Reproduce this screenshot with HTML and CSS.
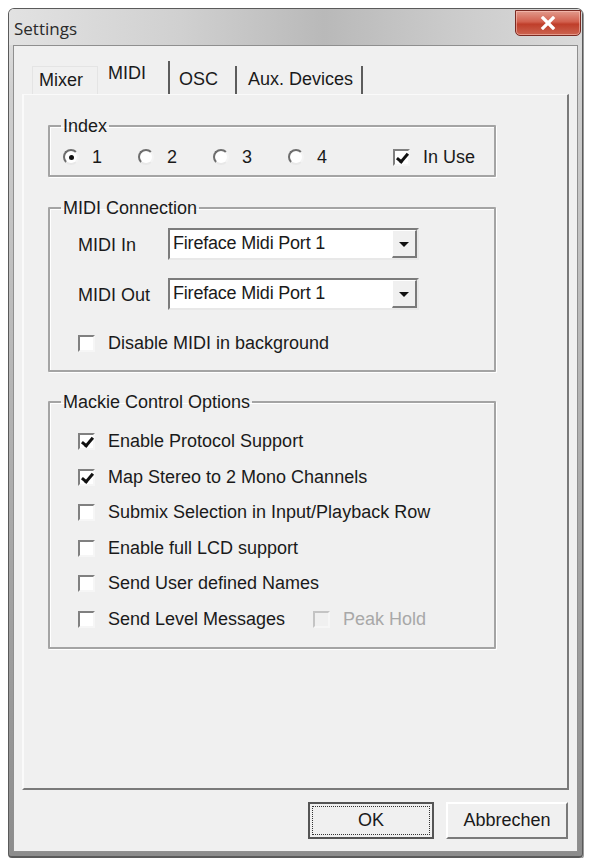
FILE: index.html
```html
<!DOCTYPE html>
<html>
<head>
	<title>Settings</title>
	<link rel="stylesheet" href="styles.css">
</head>
<body>
	<div class="window">
		<div class="titlebar">
			<span class="title">Settings</span>
			<button class="close" title="Close">
				<svg width="16" height="14" viewBox="0 0 16 14"><path d="M3 2 L13 12 M13 2 L3 12" stroke="#fff" stroke-width="3.2" stroke-linecap="square"/></svg>
			</button>
		</div>
		<div class="client">
			<div class="tabs">
				<div class="tab tab-mixer">Mixer</div>
				<div class="tab tab-midi active">MIDI</div>
				<div class="tab tab-osc">OSC</div>
				<div class="tab tab-aux">Aux. Devices</div>
			</div>
			<div class="panel">
				<fieldset class="group group-index">
					<legend>Index</legend>
					<div class="index-row">
						<label class="opt radio-opt"><span class="radio on"></span>1</label>
						<label class="opt radio-opt"><span class="radio"></span>2</label>
						<label class="opt radio-opt"><span class="radio"></span>3</label>
						<label class="opt radio-opt"><span class="radio"></span>4</label>
						<label class="opt in-use"><span class="check on"></span>In Use</label>
					</div>
				</fieldset>

				<fieldset class="group group-midi">
					<legend>MIDI Connection</legend>
					<div class="port-row">
						<span class="port-label">MIDI In</span>
						<div class="combo">
							<span class="combo-text">Fireface Midi Port 1</span>
							<span class="combo-btn"><span class="arrow"></span></span>
						</div>
					</div>
					<div class="port-row">
						<span class="port-label">MIDI Out</span>
						<div class="combo">
							<span class="combo-text">Fireface Midi Port 1</span>
							<span class="combo-btn"><span class="arrow"></span></span>
						</div>
					</div>
					<label class="opt bg-row"><span class="check"></span>Disable MIDI in background</label>
				</fieldset>

				<fieldset class="group group-mackie">
					<legend>Mackie Control Options</legend>
					<label class="opt mackie-row"><span class="check on"></span>Enable Protocol Support</label>
					<label class="opt mackie-row"><span class="check on"></span>Map Stereo to 2 Mono Channels</label>
					<label class="opt mackie-row"><span class="check"></span>Submix Selection in Input/Playback Row</label>
					<label class="opt mackie-row"><span class="check"></span>Enable full LCD support</label>
					<label class="opt mackie-row"><span class="check"></span>Send User defined Names</label>
					<div class="mackie-row">
						<label class="opt level-opt"><span class="check"></span>Send Level Messages</label>
						<label class="opt disabled"><span class="check"></span>Peak Hold</label>
					</div>
				</fieldset>
			</div>
			<div class="buttons">
				<button class="btn btn-default"><span class="focus">OK</span></button>
				<button class="btn">Abbrechen</button>
			</div>
		</div>
	</div>
</body>
</html>
```

FILE: styles.css
```css
body {
	margin: 0;
	padding: 8px 0 0 8px;
	background-color: #fff;
	font-family: "Liberation Sans", Arial, sans-serif;
	font-size: 18px;
	color: #1a1a1a;
}

.window {
	width: 575px;
	height: 850px;
	box-sizing: border-box;
	border: 1px solid #5a5a5a;
	border-bottom-width: 2px;
	border-radius: 6px 6px 4px 4px;
	background: linear-gradient(to bottom, #e4e4e4 0%, #cfcfcf 10%, #a9a9a9 60%, #8c8c8c 100%);
	padding: 0 4px 4px 4px;
	display: flex;
	flex-direction: column;
	box-shadow: 1px 1px 0 #9a9a9a;
}

.titlebar {
	height: 37px;
	display: flex;
	align-items: flex-start;
	justify-content: space-between;
	margin: 0 -4px;
	padding: 0 1px 0 5px;
	background: linear-gradient(to right, #e2e2e2 0%, #d0d0d0 30%, #b9b9b9 55%, #cdcdcd 80%, #dadada 100%);
	border-radius: 5px 5px 0 0;
}

.title {
	margin-top: 8px;
	font-family: "Open Sans", "Liberation Sans", sans-serif;
	font-size: 17px;
	color: #2a2a2a;
}

.close {
	width: 66px;
	height: 26px;
	margin-top: 1px;
	padding: 0;
	border: 1px solid #7a2a22;
	border-radius: 0 0 5px 5px;
	background: linear-gradient(to bottom, #e29a8c 0%, #d2604e 45%, #bf3e2a 55%, #cc6450 100%);
	display: flex;
	align-items: center;
	justify-content: center;
	box-shadow: inset 0 0 0 1px rgba(255, 210, 200, 0.5);
}

.client {
	flex: 1;
	background-color: #f0f0f0;
	border: 1px solid #8f8f8f;
	padding: 15px 8px 12px 8px;
	display: flex;
	flex-direction: column;
}

/* tabs */
.tabs {
	display: flex;
	align-items: flex-end;
	height: 33px;
}

.tab {
	box-sizing: border-box;
	height: 28px;
	line-height: 26px;
}

.tab-mixer {
	width: 66px;
	margin-left: 10px;
	padding-left: 6px;
	border: 1px solid #e4e4e4;
	border-bottom: none;
}

.tab-midi {
	width: 75px;
	height: 33px;
	line-height: 24px;
	margin-left: -3px;
	padding-left: 13px;
	border-right: 2px solid #5c5c5c;
}

.tab-osc {
	width: 67px;
	padding-left: 9px;
	border-right: 2px solid #5c5c5c;
}

.tab-aux {
	width: 126px;
	padding-left: 11px;
	border-right: 2px solid #5c5c5c;
}

.panel {
	height: 696px;
	box-sizing: border-box;
	border-top: 1px solid #fafafa;
	border-left: 2px solid #fafafa;
	border-right: 2px solid #7a7a7a;
	border-bottom: 2px solid #7a7a7a;
	padding: 21px 0 0 24px;
}

/* group boxes */
.group {
	width: 448px;
	box-sizing: border-box;
	margin: 0;
	border: 2px solid #a4a4a4;
	border-radius: 1px;
	box-shadow: 1px 1px 0 #fff, inset 1px 1px 0 #fff;
}

.group legend {
	padding: 0 2px;
	line-height: 20px;
}

.group-index {
	padding: 10px 0 7px 13px;
}

.group-index legend {
	margin-left: -2px;
}

.group-midi {
	margin-top: 21px;
	padding: 10px 0 16px 28px;
}

.group-midi legend,
.group-mackie legend {
	margin-left: -17px;
}

.group-mackie {
	margin-top: 20px;
	padding: 12px 0 10px 28px;
}

/* options */
.opt {
	display: flex;
	align-items: center;
	height: 22px;
	white-space: nowrap;
}

.index-row {
	display: flex;
	align-items: center;
}

.radio-opt {
	width: 75px;
}

.in-use {
	margin-left: 30px;
}

.radio {
	width: 16px;
	height: 16px;
	box-sizing: border-box;
	border-radius: 50%;
	border: 2px solid #6e6e6e;
	border-right-color: #f4f4f4;
	border-bottom-color: #e8e8e8;
	background: #fff;
	margin-right: 13px;
	position: relative;
}

.radio.on::after {
	content: "";
	position: absolute;
	left: 4px;
	top: 4px;
	width: 5px;
	height: 5px;
	border-radius: 50%;
	background: #111;
}

.check {
	width: 17px;
	height: 17px;
	box-sizing: border-box;
	border: 2px solid #808080;
	border-right-color: #f6f6f6;
	border-bottom-color: #f6f6f6;
	background: #fff;
	margin-right: 13px;
	position: relative;
}

.check.on::after {
	content: "";
	position: absolute;
	left: 4px;
	top: 0px;
	width: 4px;
	height: 9px;
	border: solid #111;
	border-width: 0 3px 3px 0;
	transform: rotate(40deg);
}

.disabled {
	color: #a8a8a8;
}

.disabled .check {
	border-color: #c4c4c4;
	border-right-color: #f6f6f6;
	border-bottom-color: #f6f6f6;
	background: #f0f0f0;
}

/* midi ports */
.port-row {
	display: flex;
	align-items: center;
	margin-bottom: 18px;
}

.group-midi .port-row + .port-row {
	margin-bottom: 0;
}

.port-label {
	width: 90px;
	padding-top: 3px;
}

.combo {
	width: 251px;
	height: 32px;
	box-sizing: border-box;
	display: flex;
	align-items: stretch;
	background: #fff;
	border: 2px solid #7c7c7c;
	border-right-color: #e8e8e8;
	border-bottom-color: #e8e8e8;
}

.combo-text {
	flex: 1;
	padding-left: 3px;
	line-height: 26px;
	letter-spacing: -0.2px;
}

.combo-btn {
	width: 25px;
	box-sizing: border-box;
	background: #f0f0f0;
	border: 1px solid #fff;
	border-right: 2px solid #7a7a7a;
	border-bottom: 2px solid #7a7a7a;
	display: flex;
	align-items: center;
	justify-content: center;
}

.arrow {
	width: 0;
	height: 0;
	border-left: 5px solid transparent;
	border-right: 5px solid transparent;
	border-top: 5px solid #111;
	margin-top: 2px;
}

.bg-row {
	margin-top: 22px;
}

/* mackie */
.mackie-row {
	height: 35.5px;
	display: flex;
	align-items: center;
}

.level-opt {
	width: 235px;
}

/* dialog buttons */
.buttons {
	display: flex;
	justify-content: flex-end;
	gap: 12px;
	margin-top: 12px;
	padding-right: 1px;
}

.btn {
	height: 37px;
	width: 122px;
	box-sizing: border-box;
	font-family: "Liberation Sans", Arial, sans-serif;
	font-size: 18px;
	color: #1a1a1a;
	background: #f0f0f0;
	border: 2px solid #fff;
	border-right-color: #7a7a7a;
	border-bottom-color: #7a7a7a;
	padding: 0;
}

.btn-default {
	width: 126px;
	border: 2px solid #555;
	padding: 2px;
}

.btn-default .focus {
	display: flex;
	align-items: center;
	justify-content: center;
	height: 100%;
	border: 1px dotted #333;
	box-sizing: border-box;
}
```
